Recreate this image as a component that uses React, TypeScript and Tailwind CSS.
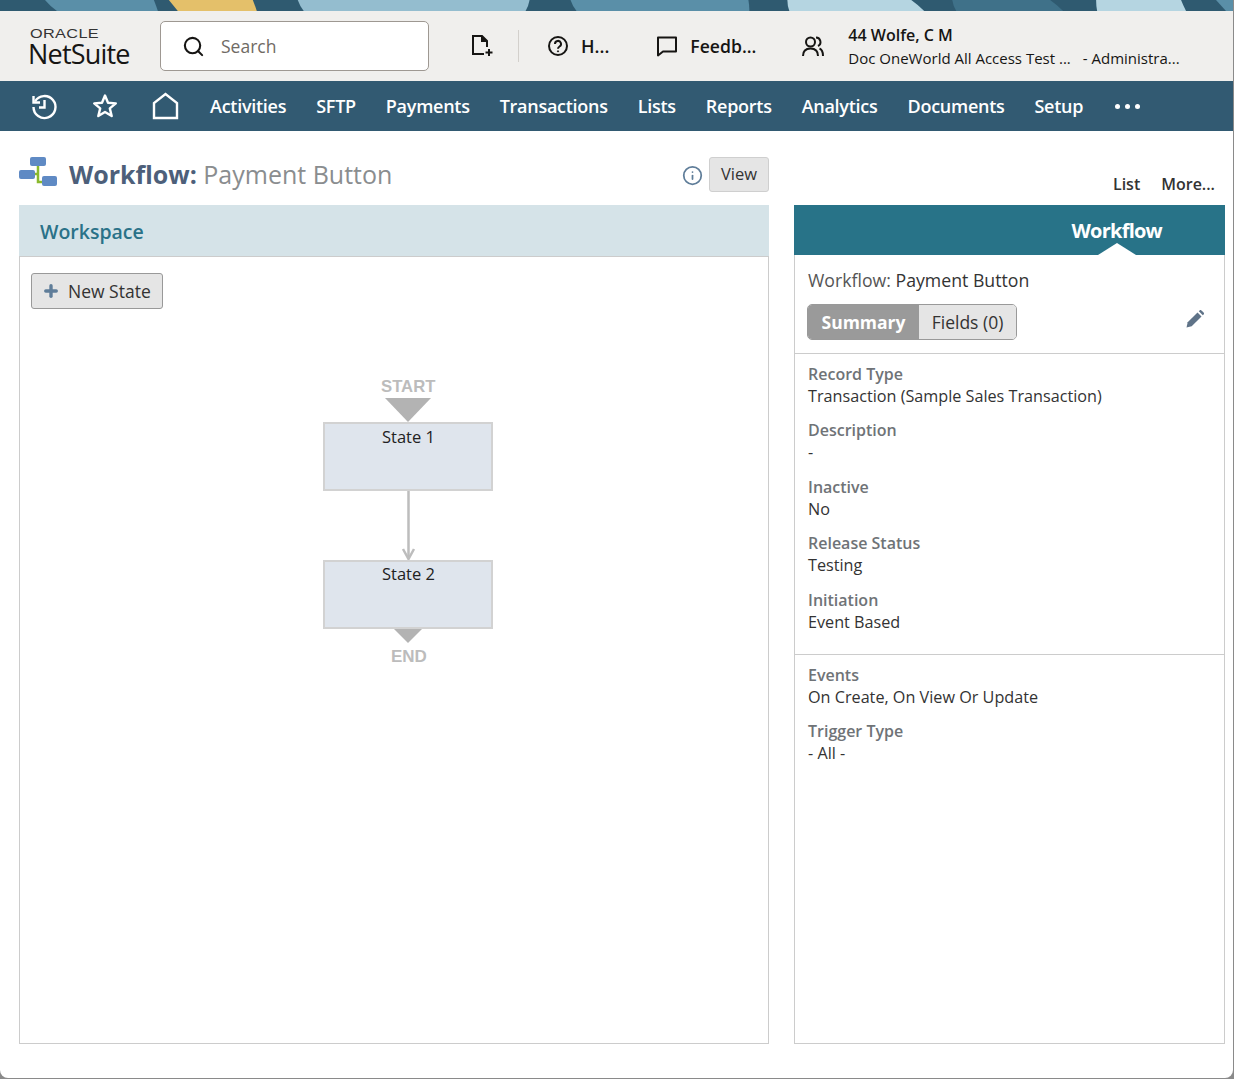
import { Plus, Search, Info } from "lucide-react";

const navItems = ["Activities", "SFTP", "Payments", "Transactions", "Lists", "Reports", "Analytics", "Documents", "Setup"];

function Banner() {
  return (
    <svg className="block h-[11px] w-full" viewBox="0 0 1234 11" preserveAspectRatio="none">
      <rect width="1234" height="11" fill="#2f5a70" />
      <path d="M45 0 Q50 6 57 11 H158 Q156 5 154 0 Z" fill="#5a8fa8" />
      <path d="M169 0 L178 11 H257 Q255 5 253 0 Z" fill="#e4c06a" />
      <path d="M298 0 Q300 6 304 11 H526 Q529 6 530 0 Z" fill="#94bdcf" />
      <path d="M571 0 Q573 6 577 11 H750 Q750 5 749 0 Z" fill="#5a8fa8" />
      <path d="M788 0 Q788 6 790 11 H925 Q919 5 912 0 Z" fill="#b5d5e1" />
      <path d="M953 0 Q954 6 957 11 H1064 Q1058 5 1051 0 Z" fill="#3f7189" />
      <path d="M1097 0 Q1097 6 1098 11 H1187 Q1184 5 1182 0 Z" fill="#b5d5e1" />
      <path d="M1217 0 L1227 11 H1234 V0 Z" fill="#5a8fa8" />
    </svg>
  );
}

function Field({ label, value }: { label: string; value: string }) {
  return (
    <div>
      <div className="text-[16px] font-semibold leading-[22px] text-[#6f7377]">{label}</div>
      <div className="text-[16.200px] leading-[22px] text-[#333]">{value}</div>
    </div>
  );
}

export default function App() {
  return (
    <div className="h-[1079px] w-[1234px] overflow-hidden bg-[#8a8a8a] font-['Open_Sans',sans-serif]">
      <div className="flex h-[1078px] w-[1233px] flex-col overflow-hidden rounded-b-[8px] bg-white">
        <Banner />
        <header className="flex h-[70px] items-center bg-[#f0efed] text-[#161513]">
          <div className="ml-[29px] w-[131px] shrink-0 pt-[3px]">
            <div className="ml-px origin-left font-['Liberation_Sans',sans-serif] text-[13px] leading-[13px] tracking-[0.3px] text-[#333] [transform:scaleX(1.25)]">ORACLE</div>
            <div className="-ml-px text-[27px] leading-[28px] tracking-[-0.8px]">NetSuite</div>
          </div>
          <div className="flex h-[50px] w-[269px] shrink-0 items-center rounded-[5px] border border-[#9e9892] bg-white pl-[21px]">
            <Search size={23} strokeWidth={2.200} />
            <span className="ml-[16px] text-[17.500px] text-[#6f6a64]">Search</span>
          </div>
          <svg className="ml-[41px] shrink-0" width="24" height="26" viewBox="0 0 24 26" fill="none" stroke="#161513" strokeWidth="2">
            <path d="M14 21H3V3h9l5 5v6" />
            <path d="M12 3v5h5" fill="#161513" />
            <path d="M19 16v7M15.500 19.500h7" />
          </svg>
          <div className="ml-[24px] h-[32px] w-px bg-[#d3d0cc]" />
          <svg className="ml-[28px] shrink-0" width="22" height="22" viewBox="0 0 22 22" fill="none" stroke="#161513" strokeWidth="2">
            <circle cx="11" cy="11" r="9" />
            <path d="M8 9a3 3 0 1 1 4.500 2.500c-1 .6-1.500 1-1.500 2.300" />
            <circle cx="11" cy="16.300" r="0.600" fill="#161513" strokeWidth="1" />
          </svg>
          <span className="ml-[12px] text-[18px] font-semibold">H...</span>
          <svg className="ml-[46px] shrink-0" width="24" height="24" viewBox="0 0 24 24" fill="none" stroke="#161513" strokeWidth="2">
            <path d="M3 3.500h18v14H8l-5 4z" strokeLinejoin="round" />
          </svg>
          <span className="ml-[11px] text-[17.600px] font-semibold">Feedb...</span>
          <svg className="ml-[45px] shrink-0" width="24" height="24" viewBox="0 0 24 24" fill="none" stroke="#161513" strokeWidth="2">
            <circle cx="9.500" cy="8" r="4.500" />
            <path d="M2 22c0-5 3-7.500 7.500-7.500S17 17 17 22" />
            <path d="M15 3.500a4.500 4.500 0 0 1 2 8.500" />
            <path d="M18.500 14.500c2.500 1 3.500 4 3.500 7.500" />
          </svg>
          <div className="ml-[23px] whitespace-nowrap">
            <div className="text-[16px] font-semibold leading-[24px]">44 Wolfe, C M</div>
            <div className="text-[15px] leading-[22px]">Doc OneWorld All Access Test ...<span className="ml-[12px]">- Administra...</span></div>
          </div>
        </header>
        <nav className="flex h-[50px] items-center bg-[#325a72] text-white">
          <svg className="ml-[30px] shrink-0" width="29" height="29" viewBox="0 0 29 29" fill="none" stroke="#fff" strokeWidth="2.400">
            <path d="M5 9.500a11 11 0 1 1-1.500 5.500" />
            <path d="M3.500 4v6.500H10" />
            <path d="M14.500 8v7.500H9" />
          </svg>
          <svg className="ml-[32px] shrink-0" width="28" height="28" viewBox="0 0 28 28" fill="none" stroke="#fff" strokeWidth="2.400" strokeLinejoin="round">
            <path d="M14 3.500l3 7.300 7.800.6-6 5 1.900 7.600L14 19.900 7.300 24l1.900-7.600-6-5 7.800-.6z" />
          </svg>
          <svg className="ml-[32px] shrink-0" width="30" height="28" viewBox="0 0 30 28" fill="none" stroke="#fff" strokeWidth="2.400">
            <path d="M3 26V11L14.500 2 26 11v15z" />
          </svg>
          <div className="ml-[29px] flex gap-[30px] whitespace-nowrap text-[18px] font-semibold tracking-[-0.270px]">
            {navItems.map((item) => (
              <span key={item}>{item}</span>
            ))}
          </div>
          <div className="ml-[32px] flex gap-[5px]">
            <span className="h-[5px] w-[5px] rounded-full bg-white" />
            <span className="h-[5px] w-[5px] rounded-full bg-white" />
            <span className="h-[5px] w-[5px] rounded-full bg-white" />
          </div>
        </nav>
        <main className="flex flex-1 pb-[34px] pl-[19px] pr-[8px]">
          <section className="flex w-[750px] shrink-0 flex-col">
            <div className="flex h-[74px] items-start pt-[26px]">
              <svg className="shrink-0" width="38" height="29" viewBox="0 0 38 29">
                <path d="M19 8v17h7" fill="none" stroke="#8ab92d" strokeWidth="2.500" />
                <path d="M10 17h9" fill="none" stroke="#8ab92d" strokeWidth="2.500" />
                <rect x="11" y="0" width="16" height="9" rx="2" fill="#5f8ac4" />
                <rect x="0" y="13" width="16" height="9" rx="2" fill="#5f8ac4" />
                <rect x="23" y="19" width="15" height="10" rx="2" fill="#5f8ac4" />
              </svg>
              <h1 className="-mt-px ml-[12px] whitespace-nowrap text-[25px] leading-[36px] text-[#8a8d8f]">
                <span className="font-bold text-[#4d5f7a]">Workflow:</span> Payment Button
              </h1>
              <Info className="ml-auto mt-[8px] text-[#5f7d99]" size={21} strokeWidth={2} />
              <button className="ml-[6px] h-[35px] w-[60px] rounded-[3px] border border-[#cfcfcf] bg-[#e5e5e5] text-[16.500px] text-[#333]">View</button>
            </div>
            <div className="flex flex-1 flex-col border-x border-b border-[#cccccc]">
              <div className="-mx-px flex h-[52px] items-center border-b border-[#cccccc] bg-[#d5e3e8] pl-[21px] pt-[3px] text-[19.500px] font-semibold text-[#2a7288]">Workspace</div>
              <div className="relative flex-1">
                <button className="absolute left-[11px] top-[16px] flex h-[36px] w-[132px] items-center rounded-[3px] border border-[#999] bg-[#e5e5e5] pl-[10px] text-[17.500px] text-[#333]">
                  <Plus size={18} strokeWidth={4.500} className="text-[#5f7d99]" />
                  <span className="ml-[8px]">New State</span>
                </button>
                <span className="absolute left-[361px] top-[120px] font-['Liberation_Sans',sans-serif] text-[16.700px] font-bold leading-[20px] text-[#bcbcbc]">START</span>
                <div className="absolute left-[365px] top-[141px] h-[24px] w-[46px] bg-[#b3b3b3] [clip-path:polygon(0_0,100%_0,50%_100%)]" />
                <div className="absolute left-[303px] top-[165px] h-[69px] w-[170px] border-2 border-[#d2d2d2] bg-[#dfe5ed] pl-px pt-[1px] text-center text-[16.500px] leading-[24px] text-[#222]">State 1</div>
                <svg className="absolute left-[380px] top-[234px]" width="17" height="70" viewBox="0 0 17 70" fill="none" stroke="#bdbdbd" strokeWidth="2.500">
                  <path d="M8.500 0v68" />
                  <path d="M3 58l5.500 10L14 58" />
                </svg>
                <div className="absolute left-[303px] top-[303px] h-[69px] w-[170px] border-2 border-[#d2d2d2] bg-[#dfe5ed] pl-px text-center text-[16.500px] leading-[24px] text-[#222]">State 2</div>
                <div className="absolute left-[374px] top-[372px] h-[14px] w-[28px] bg-[#b3b3b3] [clip-path:polygon(0_0,100%_0,50%_100%)]" />
                <span className="absolute left-[371px] top-[390px] font-['Liberation_Sans',sans-serif] text-[17px] font-bold leading-[20px] text-[#bcbcbc]">END</span>
              </div>
            </div>
          </section>
          <aside className="ml-[25px] flex w-[431px] shrink-0 flex-col">
            <div className="flex h-[74px] items-start justify-end gap-[21px] pr-[10px] pt-[42px] text-[16px] font-semibold leading-[22px] text-[#333]">
              <span>List</span>
              <span>More...</span>
            </div>
            <div className="flex flex-1 flex-col border border-t-0 border-[#cccccc]">
              <div className="relative -mx-px flex h-[50px] items-center justify-end bg-[#287388] pr-[63px] pt-[2px] text-[20px] font-bold tracking-[-0.750px] text-white">
                Workflow
                <div className="absolute bottom-0 right-[89px] h-[12px] w-[38px] bg-white [clip-path:polygon(0_100%,50%_0,100%_100%)]" />
              </div>
              <div className="relative h-[99px] border-b border-[#cccccc] px-[13px] pt-[13px]">
                <div className="text-[17.700px] leading-[24px] text-[#333]"><span className="text-[#555]">Workflow:</span> Payment Button</div>
                <div className="-ml-px mt-[12px] flex h-[36px] w-[210px] overflow-hidden rounded-[5px] border border-[#999] text-[17.500px]">
                  <span className="flex w-[111px] items-center justify-center bg-[#9a9a9a] font-bold text-white">Summary</span>
                  <span className="flex flex-1 items-center justify-center bg-[#e5e5e5] text-[#333]">Fields (0)</span>
                </div>
                <svg className="absolute right-[20px] top-[55px]" width="18" height="18" viewBox="0 0 18 18" fill="#5f7388">
                  <path d="M0.500 17.500l1.200-5.200L11.500 2.500l4 4-9.800 9.800z" />
                  <path d="M12.800 1.200l1-1c.5-.4 1-.4 1.500 0l2.500 2.500c.4.500.4 1 0 1.500l-1 1z" />
                </svg>
              </div>
              <div className="flex h-[301px] flex-col gap-[12.400px] border-b border-[#cccccc] px-[13px] pt-[9px]">
                <Field label="Record Type" value="Transaction (Sample Sales Transaction)" />
                <Field label="Description" value="-" />
                <Field label="Inactive" value="No" />
                <Field label="Release Status" value="Testing" />
                <Field label="Initiation" value="Event Based" />
              </div>
              <div className="flex flex-col gap-[12px] px-[13px] pt-[9px]">
                <Field label="Events" value="On Create, On View Or Update" />
                <Field label="Trigger Type" value="- All -" />
              </div>
            </div>
          </aside>
        </main>
      </div>
    </div>
  );
}
